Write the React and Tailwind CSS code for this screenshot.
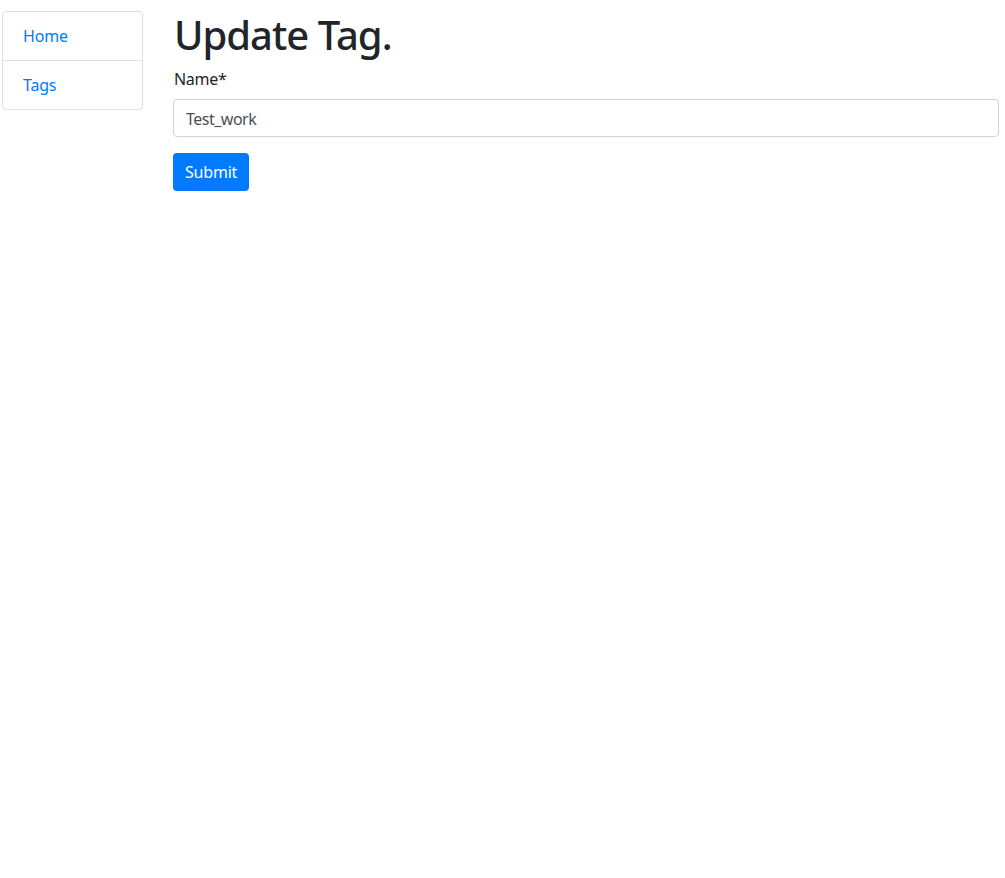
export default function App() {
  return (
    <div className="flex min-h-screen bg-white text-[#212529] font-['Noto_Sans','Open_Sans',sans-serif] text-base">
      <div className="ml-[2px] mt-[11px] w-[141px] shrink-0 self-start">
        <ul className="border border-black/[0.125] rounded-[4px]">
          <li className="px-5 py-3 leading-6">
            <a href="#" className="text-[#007bff] tracking-[-0.2px]">Home</a>
          </li>
          <li className="px-5 py-3 leading-6 border-t border-black/[0.125]">
            <a href="#" className="text-[#007bff] tracking-[-0.2px]">Tags</a>
          </li>
        </ul>
      </div>

      <div className="flex-1 ml-[30px] mr-[6px] mt-[11px]">
        <h1 className="text-[40px] font-medium leading-[48px] mb-2 pl-px tracking-[-1px]">Update Tag.</h1>
        <form onSubmit={(e) => e.preventDefault()}>
          <div className="mb-4">
            <label className="block leading-6 mb-2 pl-px tracking-[-0.3px]">Name*</label>
            <input
              defaultValue="Test_work"
              className="block w-full h-[38px] px-3 pt-px border border-[#ced4da] rounded-[4px] text-[#495057] leading-6 outline-none tracking-[-0.5px]"
            />
          </div>
          <button className="bg-[#007bff] text-white rounded-[4px] px-3 h-[38px] leading-6 tracking-[-0.2px]">
            Submit
          </button>
        </form>
      </div>
    </div>
  );
}
